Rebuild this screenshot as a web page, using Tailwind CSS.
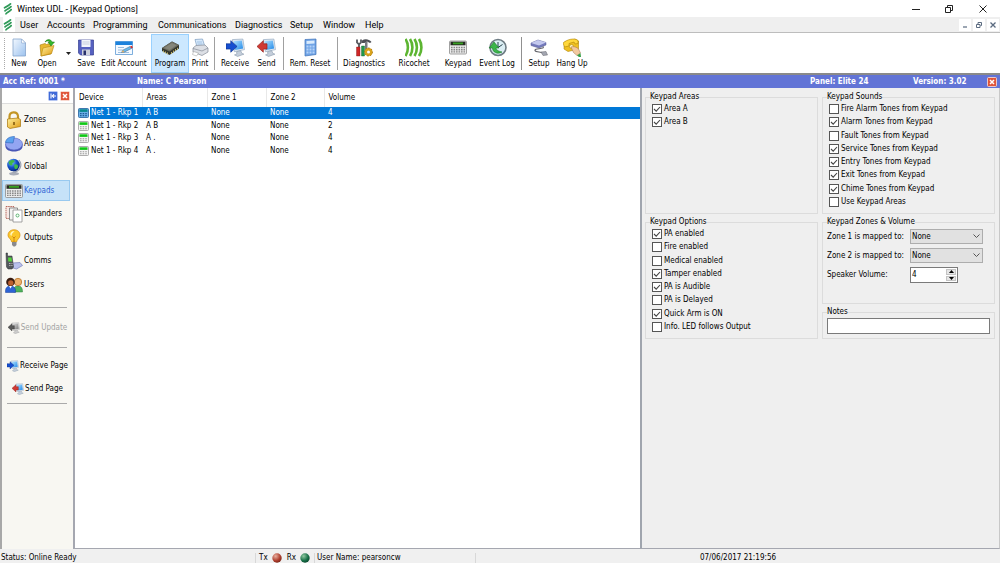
<!DOCTYPE html>
<html lang="en">
<head>
  <meta charset="UTF-8">
  <meta name="viewport" content="width=device-width, initial-scale=1.0">
  <title>Wintex UDL - [Keypad Options]</title>
  <script src="https://cdn.jsdelivr.net/npm/@tailwindcss/browser@4"></script>
</head>
<body class="h-screen flex flex-col overflow-hidden bg-white text-black text-[8px] leading-[10px] font-['DejaVu_Sans_Condensed','Noto_Sans',sans-serif]">

  <!-- Shared icons -->
  <svg class="absolute w-0 h-0" aria-hidden="true">
    <defs>
      <linearGradient id="g-screen" x1="0" y1="0" x2="1" y2="1"><stop offset="0" stop-color="#b4e4ff"/><stop offset="1" stop-color="#1c86e8"/></linearGradient>
      <linearGradient id="g-paper" x1="0" y1="0" x2="1" y2="1"><stop offset="0" stop-color="#f2f8ff"/><stop offset="1" stop-color="#9cc2ee"/></linearGradient>
      <linearGradient id="g-gold" x1="0" y1="0" x2="1" y2="1"><stop offset="0" stop-color="#fff2a0"/><stop offset="1" stop-color="#e09a10"/></linearGradient>
      <radialGradient id="g-globe" cx=".35" cy=".3" r=".8"><stop offset="0" stop-color="#7cc4ff"/><stop offset=".5" stop-color="#1450c8"/><stop offset="1" stop-color="#06206e"/></radialGradient>
      <radialGradient id="g-red" cx=".35" cy=".3" r=".8"><stop offset="0" stop-color="#e8b0a0"/><stop offset=".6" stop-color="#b04030"/><stop offset="1" stop-color="#702010"/></radialGradient>
      <radialGradient id="g-green" cx=".35" cy=".3" r=".8"><stop offset="0" stop-color="#90c8a0"/><stop offset=".6" stop-color="#187048"/><stop offset="1" stop-color="#084028"/></radialGradient>
    </defs>
    <symbol id="i-logo" viewBox="0 0 10 12">
      <g fill="none" stroke="#2f9a58" stroke-width="1.700" stroke-linecap="round"><path d="M1.500 4.800C3 3.500 5 3.500 7.500.9"/><path d="M2 7.800C3.500 6.200 5.500 6.200 8 3.600"/><path d="M3 10.800C4.500 9 6 9 8.200 6.600"/></g>
    </symbol>
    <symbol id="i-monitor" viewBox="0 0 18 18">
      <path d="M6 1.500L16 1l1.500 10L8 13z" fill="#dfe8f2" stroke="#8ea4bd" stroke-width=".6"/>
      <path d="M7.200 2.800l7.800-.5 1.200 7.700-7.500 1.400z" fill="url(#g-screen)"/>
      <path d="M10 13l4-1 1 2.500 2 .8-6 2.200-3-1.500 2.300-.8z" fill="#c4cedb" stroke="#8494a8" stroke-width=".5"/>
    </symbol>
    <symbol id="i-receive" viewBox="0 0 18 18">
      <use href="#i-monitor"/>
      <path d="M0 5.500h4.500V2.500L10.500 8l-6 5.500v-3H0z" fill="#164fd0" stroke="#0b2f8a" stroke-width=".6"/>
    </symbol>
    <symbol id="i-send" viewBox="0 0 18 18">
      <use href="#i-monitor"/>
      <path d="M9.500 5.500H6V2.500L0 8l6 5.500v-3h3.500z" fill="#d03a34" stroke="#8c1c18" stroke-width=".6"/>
    </symbol>
    <symbol id="i-keypad" viewBox="0 0 18 14">
      <rect x=".5" y=".5" width="17" height="13" rx="1" fill="#ececec" stroke="#8c8c8c" stroke-width=".8"/>
      <rect x="1.500" y="1.200" width="15" height="3.600" fill="#262c22"/><rect x="4" y="2" width="10" height="1.800" fill="#38a022"/>
      <g stroke="#888" stroke-width="1.400" stroke-dasharray="1.600 .9"><path d="M2 7h14M2 9.200h14M2 11.400h14"/></g>
    </symbol>
    <symbol id="i-device" viewBox="0 0 11 10">
      <rect x=".5" y=".5" width="10" height="9" rx="1" fill="#f4f4f4" stroke="#999" stroke-width=".8"/>
      <rect x="1.500" y="1.300" width="8" height="2.600" fill="#10c818"/>
      <path d="M2 5.700h7M2 7.700h7" stroke="#999" stroke-width="1.100" stroke-dasharray="1.600 1"/>
    </symbol>
    <symbol id="i-device-active" viewBox="0 0 11 10">
      <rect x=".5" y=".5" width="10" height="9" rx="1" fill="#6ab0e8" stroke="#22609c" stroke-width=".8"/>
      <rect x="1.500" y="1.300" width="8" height="2.600" fill="#08888c"/>
      <path d="M2 5.700h7M2 7.700h7" stroke="#1e5c98" stroke-width="1.200" stroke-dasharray="1.600 1"/>
    </symbol>
    <symbol id="i-close" viewBox="0 0 10 10">
      <rect x=".5" y=".5" width="9" height="9" rx="1" fill="#e0553a" stroke="#fbe4dc" stroke-width=".8"/>
      <path d="M3 3l4 4M7 3L3 7" stroke="#fff" stroke-width="1.500"/>
    </symbol>
    <symbol id="i-check" viewBox="0 0 10 10"><path d="M2 5l2.200 2.200L8 3" fill="none" stroke="#444" stroke-width="1.100"/></symbol>
  </svg>

  <!-- Title bar -->
  <header class="h-[17px] shrink-0 flex items-center pl-[3px] font-['Roboto',sans-serif] text-[9px]">
    <svg class="w-[10px] h-3 mr-1"><use href="#i-logo"/></svg>
    <h1>Wintex UDL - [Keypad Options]</h1>
    <div class="ml-auto flex h-full">
      <button aria-label="Minimize" class="w-[33px] flex items-center justify-center"><svg class="w-2 h-2" viewBox="0 0 8 8"><path d="M0 4.500h8" stroke="#222"/></svg></button>
      <button aria-label="Restore" class="w-[34px] flex items-center justify-center"><svg class="w-2 h-2" viewBox="0 0 8 8" fill="none" stroke="#222"><path d="M.5 2.500h5v5h-5zM2.500 2V.5h5v5H6"/></svg></button>
      <button aria-label="Close" class="w-[34px] flex items-center justify-center"><svg class="w-2 h-2" viewBox="0 0 8 8"><path d="M.5.500l7 7M7.500.500l-7 7" stroke="#222"/></svg></button>
    </div>
  </header>

  <!-- Menu -->
  <nav class="h-[15px] shrink-0 flex items-center bg-[#efefef] pl-[3px] font-['Roboto',sans-serif] text-[9px]">
    <span class="bg-white h-full w-3 mr-[5px] flex items-center"><svg class="w-[10px] h-3"><use href="#i-logo"/></svg></span>
    <button class="w-[27px] text-left">User</button>
    <button class="w-[46px] text-left">Accounts</button>
    <button class="w-[65px] text-left">Programming</button>
    <button class="w-[77px] text-left">Communications</button>
    <button class="w-[55px] text-left">Diagnostics</button>
    <button class="w-[33px] text-left">Setup</button>
    <button class="w-[42px] text-left">Window</button>
    <button>Help</button>
    <div class="ml-auto flex gap-[2px] h-3 pr-px">
      <button aria-label="Minimize child" class="w-3 bg-white flex items-center justify-center"><svg class="w-[6px] h-[6px]" viewBox="0 0 6 6"><path d="M1 5h4" stroke="#5b6b80" stroke-width="1.200"/></svg></button>
      <button aria-label="Restore child" class="w-3 bg-white flex items-center justify-center"><svg class="w-[6px] h-[6px]" viewBox="0 0 6 6" fill="none" stroke="#5b6b80"><path d="M.5 2.500h3.500v3H.5zM2 2V.5h3.500v3H4.500"/></svg></button>
      <button aria-label="Close child" class="w-3 bg-white flex items-center justify-center"><svg class="w-[6px] h-[6px]" viewBox="0 0 6 6"><path d="M.5.500l5 5M5.500.500l-5 5" stroke="#5b6b80" stroke-width="1.300"/></svg></button>
    </div>
  </nav>

  <!-- Toolbar -->
  <div class="h-[43px] shrink-0 border-t border-[#bdbdbd] border-b-2 border-b-[#8a8a8a] flex pl-1 pt-px text-center *:shrink-0">
    <span class="w-px my-1 border-l border-dotted border-[#aaa]"></span>
    <button class="w-7 flex flex-col items-center pt-1 gap-[2px]">
      <svg class="w-[18px] h-[19px]" viewBox="0 0 18 19"><path d="M3 1h8.500l4 4v13H3z" fill="url(#g-paper)" stroke="#86a4cc" stroke-width=".8"/><path d="M11.500 1v4h4z" fill="#fff" stroke="#86a4cc" stroke-width=".6"/></svg>
      New
    </button>
    <button class="w-7 flex flex-col items-center pt-1 gap-[2px]">
      <svg class="w-[18px] h-[19px]" viewBox="0 0 18 19"><path d="M2 7l5-1.500 1.500 1L13 5v11L3 18z" fill="#e8b830" stroke="#a87c10" stroke-width=".6"/><path d="M5 10l11-2.500-2.500 8L3 18z" fill="url(#g-gold)" stroke="#b8860b" stroke-width=".6"/><path d="M7 4C9 .5 13 1 14 4h2.500L13 8 10 4h2C11 2.500 9 2.500 7 4z" fill="#35b82c" stroke="#177512" stroke-width=".5"/></svg>
      Open
    </button>
    <button aria-label="Open recent" class="w-[14px] flex items-center justify-center"><svg class="w-[5px] h-[3px]" viewBox="0 0 5 3"><path d="M0 0h5L2.500 3z" fill="#222"/></svg></button>
    <button class="w-[22px] flex flex-col items-center pt-1 gap-[2px]">
      <svg class="w-[18px] h-[19px]" viewBox="0 0 18 19"><path d="M1.500 2h15v15h-13l-2-2z" fill="#5560c0" stroke="#343d90" stroke-width=".7"/><path d="M4.500 2h9v7h-9z" fill="#f2f4fb"/><path d="M5.500 4h7M5.500 6h7" stroke="#b5bbd2" stroke-width=".7"/><path d="M5 11.500h8V17H5z" fill="#cdd1dc"/><path d="M6.500 12.500H9V17H6.500z" fill="#28306c"/></svg>
      Save
    </button>
    <button class="w-[54px] flex flex-col items-center pt-1 gap-[2px] whitespace-nowrap">
      <svg class="w-[18px] h-[19px]" viewBox="0 0 18 19"><path d="M.5 3.500h17v13H.5z" fill="#f4f9ff" stroke="#5e9bd4" stroke-width=".8"/><path d="M.5 3.500h17V7H.5z" fill="#1c82dc"/><path d="M3 9.500h6M3 12h5M3 14.500h11" stroke="#86aed4" stroke-width=".8"/><path d="M6.500 14.500L8 12l7-3.500 1.500 2-7 3.500z" fill="#6cb8e8" stroke="#35648c" stroke-width=".5"/><path d="M15 8.500l2-.8.8 2-1.300.8z" fill="#d8302c"/><path d="M6.500 14.500L8 12l1.500 2z" fill="#e8b060"/></svg>
      Edit Account
    </button>
    <button class="w-[38px] flex flex-col items-center pt-[3px] gap-[2px] border border-[#99d1ff] bg-[#cce8ff]">
      <svg class="w-[19px] h-[19px]" viewBox="0 0 19 19"><path d="M1 10l10-6.500 7 3.500v3.500L8.500 17 1 13z" fill="#34362c"/><path d="M1 10l10-6.500L18 7l-9.500 6.500z" fill="#6c6d62"/><path d="M3 10l8-5 4.500 2.200L8.500 12z" fill="#85867b"/><path d="M2.500 14.500v-2M4.500 15.500v-2M6.500 16.500v-2M10.500 16v-2M12.500 14.500v-2M14.500 13v-2M16.500 11.800v-2" stroke="#c9bd72" stroke-width=".9"/></svg>
      Program
    </button>
    <button class="w-[22px] flex flex-col items-center pt-1 gap-[2px]">
      <svg class="w-[18px] h-[19px]" viewBox="0 0 18 19"><path d="M4 1.500L11.500 1 14 9H6z" fill="#d6e9fb" stroke="#7c9cc0" stroke-width=".7"/><path d="M6 4h5M6.500 6h5" stroke="#7fa8d4" stroke-width=".6"/><path d="M2 10l3-2.500 9-.5 3 3v4l-6 3.500L2 14z" fill="#dcdfe5" stroke="#858b96" stroke-width=".7"/><path d="M2 10.500l9 2.500 6-3" fill="none" stroke="#858b96" stroke-width=".7"/><path d="M2.500 13.500l5 1.500-2 3-4-1.500z" fill="#fff" stroke="#999" stroke-width=".5"/></svg>
      Print
    </button>
    <span class="w-[6px] flex justify-center py-[3px]"><i class="w-px bg-[#a0a0a0]"></i></span>
    <button class="w-9 flex flex-col items-center pt-1 gap-[2px]">
      <svg class="w-[19px] h-[19px]"><use href="#i-receive"/></svg>
      Receive
    </button>
    <button class="w-[27px] flex flex-col items-center pt-1 gap-[2px]">
      <svg class="w-[19px] h-[19px]"><use href="#i-send"/></svg>
      Send
    </button>
    <span class="w-[6px] flex justify-center py-[3px]"><i class="w-px bg-[#a0a0a0]"></i></span>
    <button class="w-12 flex flex-col items-center pt-1 gap-[2px] whitespace-nowrap">
      <svg class="w-[18px] h-[19px]" viewBox="0 0 18 19"><path d="M4 1.500l11-.5v15.500L4 18z" fill="#6fa3e6" stroke="#3f72b8" stroke-width=".7"/><path d="M5.500 3l8-.4v3l-8 .3z" fill="#d9ebfd"/><path d="M5.500 8.500h8M5.500 11.500h8M5.500 14.500h8" stroke="#b4d2f8" stroke-width="1.800" stroke-dasharray="2 1"/></svg>
      Rem. Reset
    </button>
    <span class="w-[6px] flex justify-center py-[3px]"><i class="w-px bg-[#a0a0a0]"></i></span>
    <button class="w-12 flex flex-col items-center pt-1 gap-[2px]">
      <svg class="w-[18px] h-[19px]" viewBox="0 0 18 19"><path d="M2 1.500v3l2 2 2-2v-3M4 6v4" fill="none" stroke="#55585e" stroke-width="1.800"/><path d="M7 2.500c3-2 7-1.500 9.500 1.500l-1.500 1-3-1.500L9.500 5H7z" fill="#4c4f55"/><path d="M10 4h2.500v8H10z" fill="#777a80"/><path d="M1.500 9h3.500v9H1.500z" fill="#cf2626" stroke="#841414" stroke-width=".4"/><path d="M6.500 8h3v10h-3z" fill="#20984a" stroke="#125a2b" stroke-width=".4"/><circle cx="13.500" cy="14" r="2.700" fill="#fff" stroke="#d9a31c" stroke-width="2.400"/><circle cx="13.500" cy="14" r="4" fill="none" stroke="#a87508" stroke-width="1" stroke-dasharray="1.500 1.500"/></svg>
      Diagnostics
    </button>
    <button class="w-[52px] flex flex-col items-center pt-1 gap-[2px]">
      <svg class="w-[18px] h-[19px]" viewBox="0 0 18 19" fill="none" stroke="#5cb531" stroke-width="2.600"><path d="M.5 1c3.200 5 3.200 12 0 17M5 1c3.200 5 3.200 12 0 17M9.500 1c3.200 5 3.200 12 0 17M14 1c3.200 5 3.200 12 0 17"/></svg>
      Ricochet
    </button>
    <button class="w-9 flex flex-col items-center pt-1 gap-[2px]">
      <svg class="w-[18px] h-[19px]"><use href="#i-keypad"/></svg>
      Keypad
    </button>
    <button class="w-[42px] flex flex-col items-center pt-1 gap-[2px] whitespace-nowrap">
      <svg class="w-[19px] h-[19px]" viewBox="0 0 19 19"><circle cx="10" cy="9.500" r="8" fill="#dbeef4" stroke="#6e7c84" stroke-width="1.600"/><path d="M10 4v5.500l4.500-3" fill="none" stroke="#26424c"/><path d="M14 14C9 17 4.500 14 4.500 10H1l5-6 5 6H8c0 2 3 3.500 6 4z" fill="#3bb54a" stroke="#1a7526" stroke-width=".6"/></svg>
      Event Log
    </button>
    <span class="w-[6px] flex justify-center py-[3px]"><i class="w-px bg-[#909090]"></i></span>
    <button class="w-[30px] flex flex-col items-center pt-1 gap-[2px]">
      <svg class="w-[18px] h-[19px]" viewBox="0 0 18 19"><path d="M1 5l7-3 8 2.500v2.500l-7 3L1 7.500z" fill="#7379bb" stroke="#51568e" stroke-width=".5"/><path d="M1 5l7-3 8 2.500L9 7.500z" fill="#c3c8ee"/><path d="M13 8.500c2.500 3-9 1.500-8 4 .8 2 6 1 8 2.500" fill="none" stroke="#62636a" stroke-width="1.100"/><path d="M11 14l5-.5 1.500 3.500-4.500.5z" fill="#a4a7b2" stroke="#62636a" stroke-width=".5"/></svg>
      Setup
    </button>
    <button class="w-9 flex flex-col items-center pt-1 gap-[2px] whitespace-nowrap">
      <svg class="w-[18px] h-[19px]" viewBox="0 0 18 19"><path d="M1.500 4L12 1l3.500 2v8L5 13.500l-4-2.500z" fill="#f0c020" stroke="#b08408" stroke-width=".6"/><path d="M0 5C4 1.500 11-.5 15 2.500v3l-3 .5-1-2-5 1.500v2.500L1.500 9z" fill="#ffd83c" stroke="#b08408" stroke-width=".6"/><circle cx="8.500" cy="8.500" r="2" fill="#fff5c0" stroke="#b08408" stroke-width=".6"/><path d="M8 9c2-1 6 0 7.500 2l2 4-3.500 2.500-3.500-3z" fill="#f2c9a0" stroke="#a07348" stroke-width=".5"/><path d="M17.500 15L14 17.500l2 1.500h2z" fill="#38a048"/></svg>
      Hang Up
    </button>
  </div>

  <!-- Account bar -->
  <div class="h-[13px] shrink-0 flex items-center bg-[#6274d6] text-white font-bold pl-[3px] pr-[3px]">
    <span class="w-[134px]">Acc Ref: 0001 *</span>
    <span>Name: C Pearson</span>
    <span class="ml-auto w-[103px]">Panel: Elite 24</span>
    <span class="w-[74px]">Version: 3.02</span>
    <button aria-label="Close account" class="w-[10px] h-[10px]"><svg class="w-[10px] h-[10px]"><use href="#i-close"/></svg></button>
  </div>

  <div class="flex-1 min-h-0 flex">
    <!-- Sidebar -->
    <aside class="w-[75px] shrink-0 bg-[#f8f7f2] border-l-2 border-[#a8a8a8] border-r-2 border-r-[#a5a7b0]">
      <div class="h-4 flex justify-end items-center gap-[2px] pr-[3px] bg-white border-b border-[#ddd]">
        <button aria-label="Dock" class="w-[10px] h-[10px]"><svg class="w-[10px] h-[10px]" viewBox="0 0 10 10"><rect x=".5" y=".5" width="9" height="9" rx="1" fill="#3f6ad8" stroke="#bccbf4" stroke-width=".8"/><path d="M3 2.500v5M8 5H4.500M6 3.200L4.300 5 6 6.800" fill="none" stroke="#fff" stroke-width="1.100"/></svg></button>
        <button aria-label="Close panel" class="w-[10px] h-[10px]"><svg class="w-[10px] h-[10px]"><use href="#i-close"/></svg></button>
      </div>
      <nav class="h-[186px] mt-[5px] px-px flex flex-col justify-between *:h-[21px] *:flex *:items-center *:gap-px *:pl-[2px] *:pt-px">
        <button>
          <svg class="w-[18px] h-[18px]" viewBox="0 0 18 18"><path d="M4.500 9V5.500c0-5.500 8-5.500 8.500-.5v3" fill="none" stroke="#c39524" stroke-width="2.200"/><path d="M2.500 8l10.500-1 2.500 1.500v7L5 17.500 2.500 16z" fill="url(#g-gold)" stroke="#a87408" stroke-width=".7"/><path d="M9 11v3" stroke="#7c5408" stroke-width="1.500"/></svg>
          Zones
        </button>
        <button>
          <svg class="w-[18px] h-[18px]" viewBox="0 0 18 18"><path d="M.5 9v3c1 6 16 6 17 0V9z" fill="#4654b4"/><ellipse cx="9" cy="9" rx="8.500" ry="6" fill="#93a5f2" stroke="#5562bd" stroke-width=".6"/><path d="M8 8L.5 7.500C1 3.500 4.500 1.500 9.500 1.500z" fill="#5ba2ef" stroke="#2f65b8" stroke-width=".6"/></svg>
          Areas
        </button>
        <button>
          <svg class="w-[18px] h-[18px]" viewBox="0 0 18 18"><path d="M4 15.500c1-2 9-2 10 0s-10 3-10 0z" fill="#a9adb8"/><path d="M14 2c4 5 1 12-6 12" fill="none" stroke="#9aa2b2" stroke-width="1.200"/><circle cx="8.500" cy="7" r="6.300" fill="url(#g-globe)"/><path d="M4 3.500c2-2 5-2 5.500-.5S7 4.500 7.500 6 5 8 4.500 6.500 3 5 4 3.500zM9.500 6.500c2-1 4 .5 3.500 2.500s-3 3-3.500 1-.5-2.500 0-3.500z" fill="#40b84a"/></svg>
          Global
        </button>
        <button class="border border-[#99c9ef] bg-[#c6e2f8] text-[#2f62d4] -ml-px mr-[2px]">
          <svg class="w-[18px] h-[14px]"><use href="#i-keypad"/></svg>
          Keypads
        </button>
        <button>
          <svg class="w-[18px] h-[18px]" viewBox="0 0 18 18"><path d="M1 1.500h8v12H1z" fill="#f8e9e6" stroke="#b05c50" stroke-width=".9" stroke-dasharray="1.500 .7"/><path d="M4.500 3h8v12h-8z" fill="#f4f4f4" stroke="#777" stroke-width=".8"/><path d="M8 5h9v12H8z" fill="#fff" stroke="#8e8e8e" stroke-width=".8"/><circle cx="12.500" cy="10.500" r="1.500" fill="none" stroke="#3ba456" stroke-width=".8"/></svg>
          Expanders
        </button>
        <button>
          <svg class="w-[18px] h-[18px]" viewBox="0 0 18 18"><path d="M9 .8c4 0 6 2.500 6 5.500 0 3-3 4-3.500 6.700H6.800C6.300 10 3 9 3 6.300 3 3.300 5 .8 9 .8z" fill="#fbc72c" stroke="#d58d0a" stroke-width=".7"/><path d="M6 3.500C7 2 9 2 9.500 2.500 8 3 6.500 5 6.500 7 5 6 5 5 6 3.500z" fill="#fff7c4"/><path d="M7 13h4.500v3L10 17.500H8.500L7 16z" fill="#8a8a8e"/><path d="M7.500 7.500L9 9l1.500-1.500M9 9v4" fill="none" stroke="#c47408" stroke-width=".8"/></svg>
          Outputs
        </button>
        <button>
          <svg class="w-[18px] h-[18px]" viewBox="0 0 18 18"><path d="M7 11l8-.5 2.500 3-6 3.500-7-2z" fill="#b9c0ec" stroke="#6a72b4" stroke-width=".6"/><path d="M1 1h1.500v3H7l1.500 11-1.500 2H3L1.500 15z" fill="#54585c" stroke="#2c2f32" stroke-width=".5"/><path d="M3 5.500h3.500l.5 4H3.300z" fill="#54d43c"/><path d="M4 11.500h3.500M4.200 13.500h3.500" stroke="#bbb" stroke-dasharray="1 .5"/></svg>
          Comms
        </button>
        <button>
          <svg class="w-[18px] h-[18px]" viewBox="0 0 18 18"><path d="M8.500 16c-.5-5 2-6 4.500-6s4.500 1 4.500 6z" fill="#4fb25c" stroke="#2c7c38" stroke-width=".5"/><circle cx="13" cy="6" r="3.700" fill="#eeb06c" stroke="#b87428" stroke-width=".8"/><path d="M.5 16.500c-.5-5 2-6.500 5-6.500s5.500 1.500 5 6.500z" fill="#2d63d4" stroke="#163c96" stroke-width=".5"/><circle cx="5.500" cy="6" r="4.300" fill="#3a1c10"/><circle cx="5.800" cy="7" r="2.700" fill="#bb6030"/><path d="M4 10l1.500 2.500L7 10z" fill="#fff"/></svg>
          Users
        </button>
      </nav>
      <hr class="mt-[12px] ml-[5px] mr-[6px] border-[#aaa]">
      <button disabled class="mt-[14px] h-3 w-full flex items-center justify-center gap-px whitespace-nowrap text-[#a3a3a3]"><svg class="w-3 h-3 grayscale"><use href="#i-send"/></svg>Send Update</button>
      <hr class="mt-[13px] ml-[5px] mr-[6px] border-[#aaa]">
      <button class="mt-3 h-3 w-full flex items-center justify-center gap-px whitespace-nowrap"><svg class="w-3 h-3"><use href="#i-receive"/></svg>Receive Page</button>
      <button class="mt-[11px] h-3 w-full flex items-center justify-center gap-px whitespace-nowrap"><svg class="w-3 h-3"><use href="#i-send"/></svg>Send Page</button>
      <hr class="mt-2 ml-[5px] mr-[6px] border-[#aaa]">
    </aside>

    <!-- Device list -->
    <main class="flex-1 min-w-0 border-b border-[#a5a7b0]">
      <table class="w-full table-fixed text-left border-collapse">
        <colgroup><col class="w-[67px]"><col class="w-[65px]"><col class="w-[59px]"><col class="w-[58px]"><col></colgroup>
        <thead>
          <tr class="h-[19px] *:font-normal *:pl-1 *:pt-px [&>th:not(:last-child)]:border-r *:border-[#e8e8e8]"><th>Device</th><th>Areas</th><th>Zone 1</th><th>Zone 2</th><th>Volume</th></tr>
        </thead>
        <tbody class="[&_td]:p-0 [&_td]:pl-1 [&_td]:whitespace-nowrap [&_td:first-child]:pl-[3px] [&_td>div]:flex [&_td>div]:items-center">
          <tr class="h-3 bg-[#0078d7] text-white"><td class="bg-linear-to-r from-white from-[15px] to-transparent to-[15px]"><div><svg class="w-[11px] h-[10px] mr-[2px] shrink-0"><use href="#i-device-active"/></svg>Net 1 - Rkp 1</div></td><td>A B</td><td>None</td><td>None</td><td>4</td></tr>
          <tr class="h-[13px]"><td><div><svg class="w-[11px] h-[10px] mr-[2px] shrink-0"><use href="#i-device"/></svg>Net 1 - Rkp 2</div></td><td>A B</td><td>None</td><td>None</td><td>2</td></tr>
          <tr class="h-3"><td><div><svg class="w-[11px] h-[10px] mr-[2px] shrink-0"><use href="#i-device"/></svg>Net 1 - Rkp 3</div></td><td>A .</td><td>None</td><td>None</td><td>4</td></tr>
          <tr class="h-[13px]"><td><div><svg class="w-[11px] h-[10px] mr-[2px] shrink-0"><use href="#i-device"/></svg>Net 1 - Rkp 4</div></td><td>A .</td><td>None</td><td>None</td><td>4</td></tr>
        </tbody>
      </table>
    </main>

    <!-- Keypad settings -->
    <section class="w-[360px] shrink-0 bg-[#efefef] border-l-2 border-[#a0a5ae] border-r border-r-[#c8c8c8] border-b border-b-[#a5a7b0] pl-[3px] pr-1 pt-1 flex gap-1 items-start [&_fieldset]:border [&_fieldset]:border-[#dcdcdc] [&_fieldset]:px-1 [&_legend]:h-[10px] [&_label.opt]:flex [&_label.opt]:items-center [&_label.opt]:gap-[2px] [&_label.opt]:h-[10px] [&_label.opt]:pl-[2px] [&_label.opt]:whitespace-nowrap">
      <div class="w-[173px] flex flex-col gap-[3px]">
        <fieldset class="h-[122px]">
          <legend>Keypad Areas</legend>
          <div id="areas" class="flex flex-col gap-[3px] mt-[2px]"></div>
        </fieldset>
        <fieldset class="h-[122px]">
          <legend>Keypad Options</legend>
          <div id="options" class="h-[103px] flex flex-col justify-between mt-[2px]"></div>
        </fieldset>
      </div>
      <div class="flex-1 flex flex-col gap-[3px]">
        <fieldset class="h-[122px]">
          <legend>Keypad Sounds</legend>
          <div id="sounds" class="h-[103px] flex flex-col justify-between mt-[2px]"></div>
        </fieldset>
        <fieldset class="h-[87px]">
          <legend>Keypad Zones &amp; Volume</legend>
          <div class="grid grid-cols-[83px_73px] gap-y-1 items-center mt-[2px]">
            <label for="zone1">Zone 1 is mapped to:</label>
            <div class="relative h-[15px]">
              <select id="zone1" class="appearance-none w-full h-full bg-[#e1e1e1] border border-[#adadad] pl-px"><option>None</option></select>
              <svg class="absolute right-[3px] top-[5px] w-[7px] h-[5px] pointer-events-none" viewBox="0 0 7 5"><path d="M.5.500l3 3 3-3" fill="none" stroke="#555"/></svg>
            </div>
            <label for="zone2">Zone 2 is mapped to:</label>
            <div class="relative h-[15px]">
              <select id="zone2" class="appearance-none w-full h-full bg-[#e1e1e1] border border-[#adadad] pl-px"><option>None</option></select>
              <svg class="absolute right-[3px] top-[5px] w-[7px] h-[5px] pointer-events-none" viewBox="0 0 7 5"><path d="M.5.500l3 3 3-3" fill="none" stroke="#555"/></svg>
            </div>
            <label for="volume">Speaker Volume:</label>
            <div class="w-12 h-4 flex bg-white border border-[#7a7a7a]">
              <input id="volume" type="text" value="4" class="w-0 flex-1 pl-px outline-none">
              <div class="w-[11px] flex flex-col gap-px py-px pr-px *:flex-1 *:bg-[#e6e6e6] *:border *:border-[#c4c4c4] *:flex *:items-center *:justify-center">
                <button aria-label="Volume up"><svg class="w-[5px] h-[3px]" viewBox="0 0 5 3"><path d="M0 3h5L2.500 0z"/></svg></button>
                <button aria-label="Volume down"><svg class="w-[5px] h-[3px]" viewBox="0 0 5 3"><path d="M0 0h5L2.500 3z"/></svg></button>
              </div>
            </div>
          </div>
        </fieldset>
        <fieldset class="h-8">
          <legend><label for="notes">Notes</label></legend>
          <input id="notes" type="text" class="block w-full h-4 mt-px bg-white border border-[#7a7a7a] px-1">
        </fieldset>
      </div>
    </section>
  </div>

  <!-- Status bar -->
  <footer class="h-[14px] shrink-0 flex items-center bg-[#f0f0f0] pl-px pt-[3px] whitespace-nowrap">
    <span class="w-[254px]">Status: Online Ready</span>
    <span class="w-[59px] flex items-center border-l border-[#d8d8d8] pl-[3px]">Tx<svg class="w-[10px] h-[10px] ml-1 mr-[5px]" viewBox="0 0 10 10"><circle cx="5" cy="5" r="4.700" fill="url(#g-red)"/></svg>Rx<svg class="w-[10px] h-[10px] ml-1" viewBox="0 0 10 10"><circle cx="5" cy="5" r="4.700" fill="url(#g-green)"/></svg></span>
    <span class="w-[161px] border-l border-[#d8d8d8] pl-[2px]">User Name: pearsoncw</span>
    <span class="flex-1 border-l border-[#d8d8d8] text-center">07/06/2017 21:19:56</span>
  </footer>

  <script>
    const groups = {
      areas: [["Area A", true], ["Area B", true]],
      options: [
        ["PA enabled", true],
        ["Fire enabled", false],
        ["Medical enabled", false],
        ["Tamper enabled", true],
        ["PA is Audible", true],
        ["PA is Delayed", false],
        ["Quick Arm is ON", true],
        ["Info. LED follows Output", false],
      ],
      sounds: [
        ["Fire Alarm Tones from Keypad", false],
        ["Alarm Tones from Keypad", true],
        ["Fault Tones from Keypad", false],
        ["Service Tones from Keypad", true],
        ["Entry Tones from Keypad", true],
        ["Exit Tones from Keypad", true],
        ["Chime Tones from Keypad", true],
        ["Use Keypad Areas", false],
      ],
    };

    // Fill each group box with its tick boxes
    for (const id in groups) {
      document.getElementById(id).innerHTML = groups[id].map(([text, on]) => `
        <label class="opt">
          <span class="grid w-[10px] h-[10px]">
            <input type="checkbox" ${on ? "checked" : ""} class="peer appearance-none col-start-1 row-start-1 w-[10px] h-[10px] bg-white border border-[#555]">
            <svg class="col-start-1 row-start-1 w-[10px] h-[10px] invisible peer-checked:visible pointer-events-none"><use href="#i-check"/></svg>
          </span>
          ${text}
        </label>`).join("");
    }
  </script>
</body>
</html>
